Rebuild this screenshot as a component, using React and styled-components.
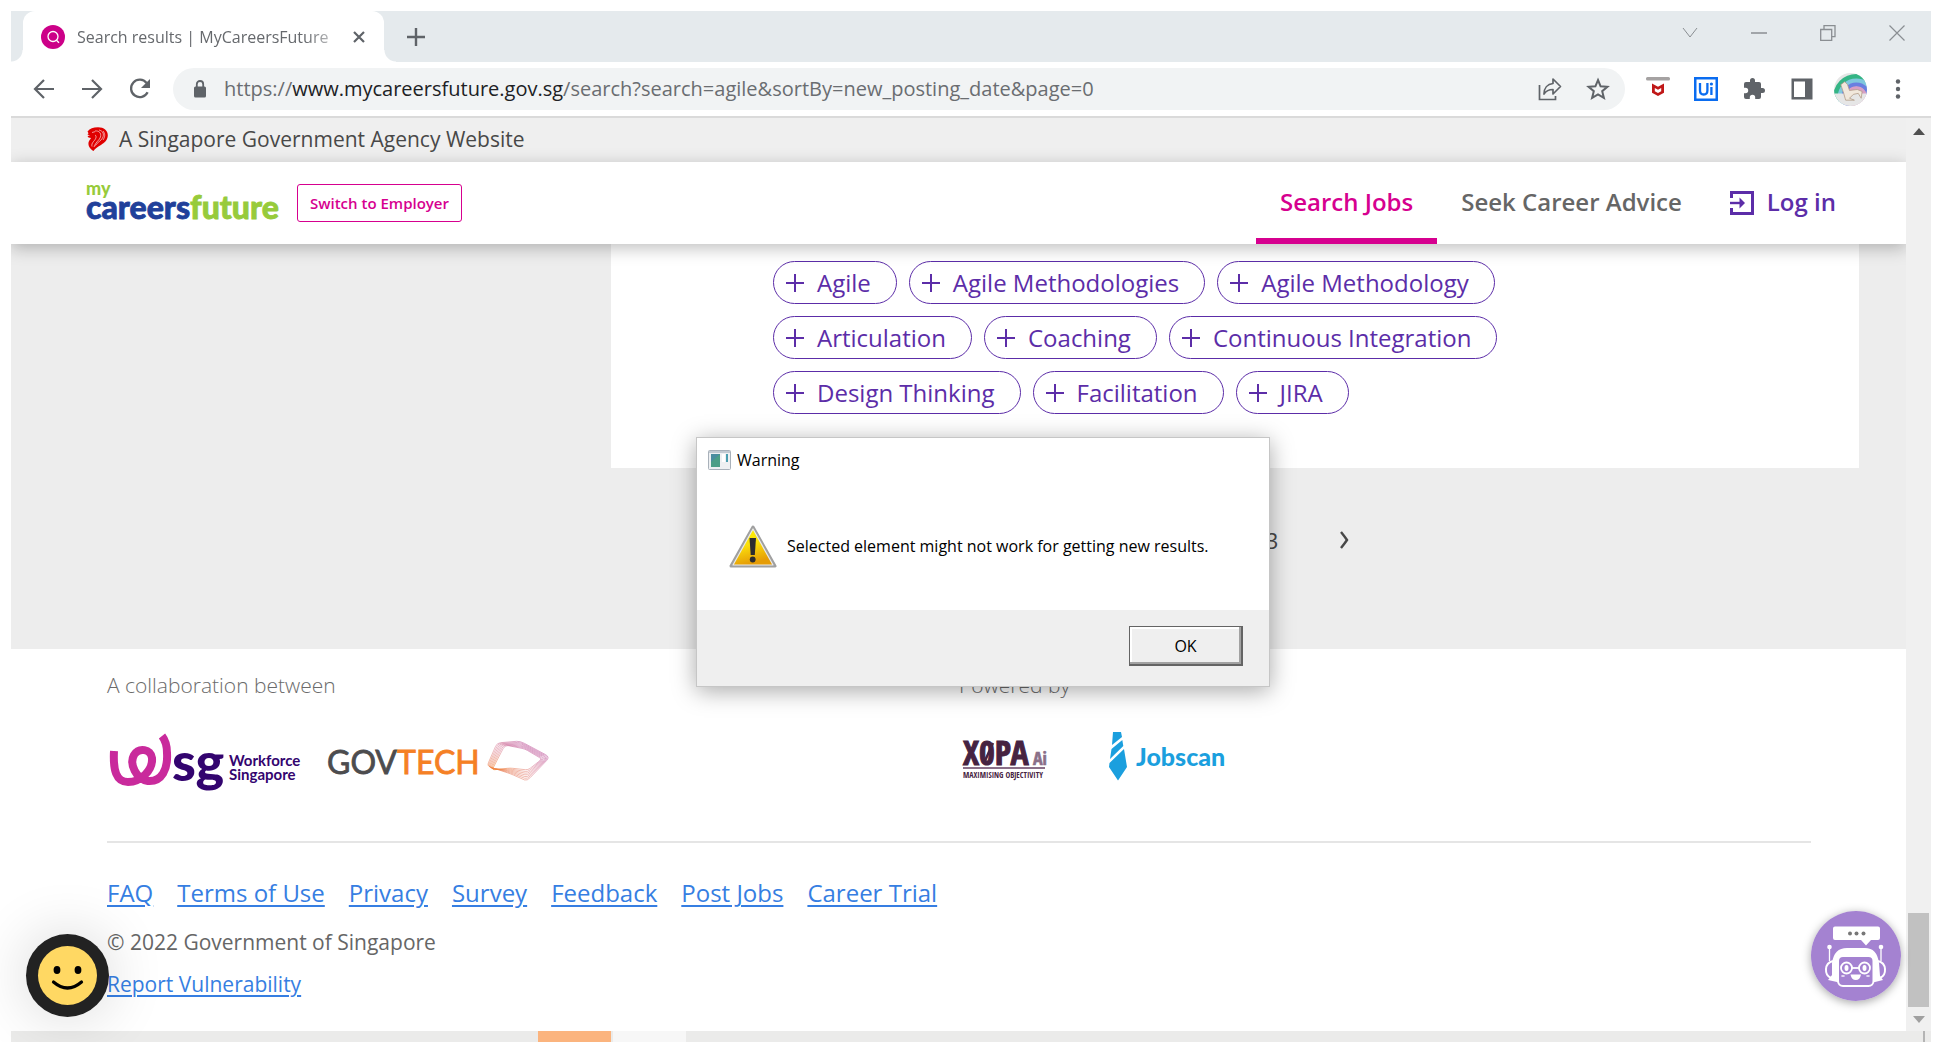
import React from "react";
import styled, { createGlobalStyle } from "styled-components";

const SANS = '"Open Sans", "Noto Sans", sans-serif';

const GlobalStyle = createGlobalStyle`
  *, *::before, *::after { box-sizing: border-box; }
  body { margin: 0; background: #fff; font-family: ${SANS}; overflow: hidden; }
  button, input { font-family: inherit; margin: 0; padding: 0; }
  button { border: 0; background: none; cursor: pointer; }
  svg { display: block; flex: none; overflow: visible; }
`;

const Desktop = styled.div`
  position: relative;
  height: 100vh;
  padding: 11px 11px 0;
  display: flex;
  flex-direction: column;
  overflow: hidden;
`;

/* ---------- browser chrome ---------- */
const TabStrip = styled.div`
  display: flex;
  align-items: center;
  height: 51px;
  padding-left: 12px;
  background: #e5eaed;
`;
const Tab = styled.div`
  position: relative;
  display: flex;
  align-items: center;
  height: 51px;
  width: 361px;
  padding: 0 18px 0 18px;
  background: #fff;
  border-radius: 12px 12px 0 0;
  &::before, &::after {
    content: "";
    position: absolute;
    bottom: 0;
    width: 12px;
    height: 12px;
  }
  &::before { left: -12px; background: radial-gradient(circle at 0 0, transparent 11px, #fff 12px); }
  &::after { right: -12px; background: radial-gradient(circle at 100% 0, transparent 11px, #fff 12px); }
`;
const TabTitle = styled.span`
  flex: 1;
  margin: 0 16px 0 12px;
  font-size: 16px;
  line-height: 24px;
  white-space: nowrap;
  color: #66696d;
  mask-image: linear-gradient(90deg, #000 88%, transparent 106%);
`;
const IconButton = styled.button`
  display: flex;
  align-items: center;
  justify-content: center;
  width: ${(p) => p.$w || 24}px;
  height: 24px;
  color: ${(p) => p.$color || "#5f6368"};
`;
const NewTab = styled(IconButton)`margin-left: 20px;`;
const WindowControls = styled.div`
  display: flex;
  margin: 0 0 8px auto;
  align-items: center;
`;
const Toolbar = styled.div`
  display: flex;
  align-items: center;
  height: 56px;
  padding: 0 21px;
  background: #fff;
  border-bottom: 2px solid #dadada;
  flex: none;
`;
const NavButtons = styled.div`
  display: flex;
  gap: 24px;
  margin-right: 21px;
`;
const Omnibox = styled.div`
  flex: 1;
  display: flex;
  align-items: center;
  height: 42px;
  padding: 0 15px 0 20px;
  border-radius: 21px;
  background: #f1f3f4;
`;
const Address = styled.span`
  flex: 1;
  margin-left: 17px;
  font-size: 20px;
  line-height: 28px;
  color: #6a6d71;
  white-space: nowrap;
  b { font-weight: 400; color: #202124; }
`;
const OmniActions = styled.div`
  display: flex;
  gap: 24px;
`;
const Extensions = styled.div`
  display: flex;
  align-items: center;
  gap: 24px;
  margin-left: 21px;
`;

/* ---------- page ---------- */
const Viewport = styled.div`
  flex: 1;
  min-height: 0;
  display: flex;
  overflow: hidden;
`;
const Page = styled.div`
  flex: 1;
  min-width: 0;
  display: flex;
  flex-direction: column;
  overflow: hidden;
`;
const GovBar = styled.div`
  display: flex;
  align-items: center;
  gap: 11px;
  height: 44px;
  padding: 0 0 2px 76px;
  background: #efefef;
  font-size: 21px;
  line-height: 32px;
  color: #484848;
  flex: none;
`;
const Header = styled.header`
  position: relative;
  z-index: 1;
  display: flex;
  align-items: center;
  height: 82px;
  padding: 0 46px 0 75px;
  background: #fff;
  box-shadow: 0 4px 16px rgba(0, 0, 0, 0.26);
  flex: none;
`;
const Brand = styled.a`text-decoration: none;`;
const SwitchButton = styled.button`
  height: 38px;
  margin-left: 17px;
  padding: 0 12px;
  border: 1px solid #d6008f;
  border-radius: 3px;
  color: #d6008f;
  font-size: 15px;
  font-weight: 600;
  white-space: nowrap;
`;
const MainNav = styled.nav`
  display: flex;
  align-self: stretch;
  margin-left: auto;
`;
const NavLink = styled.a`
  display: flex;
  align-items: center;
  gap: 13px;
  padding: 0 24px;
  border-bottom: 6px solid ${(p) => (p.$active ? "#d6008f" : "transparent")};
  border-top: 3px solid transparent;
  color: ${(p) => p.$color};
  font-size: 24px;
  font-weight: 600;
  text-decoration: none;
  white-space: nowrap;
`;
const Results = styled.main`
  padding: 0 47px 0 600px;
  background: #ededed;
`;
const Card = styled.section`
  padding: 17px 162px 54px;
  background: #fff;
`;
const Chips = styled.div`
  display: flex;
  flex-wrap: wrap;
  gap: 12px;
  max-width: 800px;
`;
const Chip = styled.button`
  display: flex;
  align-items: center;
  gap: 13px;
  height: 43px;
  padding: 0 25px 0 12px;
  border: 1px solid #5c2da8;
  border-radius: 22px;
  color: #5c2da8;
  font-size: 24px;
  white-space: nowrap;
`;
const Pagination = styled.nav`
  display: flex;
  align-items: center;
  gap: 57px;
  height: 181px;
  padding: 0 0 38px 653px;
`;
const PageButton = styled.button`
  display: grid;
  place-items: center;
  width: 16px;
  height: 32px;
  color: #484848;
  font-size: 22px;
`;
const Footer = styled.footer`
  flex: 1;
  padding: 20px 95px 0 96px;
  background: #fff;
`;
const Partners = styled.div`
  display: grid;
  grid-template-columns: 1fr 1fr;
  padding-bottom: 48px;
  border-bottom: 2px solid #e5e5e5;
`;
const PartnerLabel = styled.p`
  margin: 0 0 28px;
  font-size: 21px;
  font-weight: 300;
  line-height: 32px;
  color: #6b6b6b;
`;
const Logos = styled.div`
  display: flex;
  align-items: ${(p) => p.$align || "center"};
  gap: ${(p) => p.$gap}px;
  height: 64px;
`;
const FooterLinks = styled.div`
  display: flex;
  gap: 24px;
  margin: 32px 0 15px;
`;
const FooterLink = styled.a`
  font-size: ${(p) => (p.$small ? 21 : 24)}px;
  line-height: ${(p) => (p.$small ? 32 : 36)}px;
  color: #367ee2;
  text-decoration-thickness: 2px;
  text-underline-offset: 3px;
`;
const Copyright = styled.p`
  margin: 0 0 10px;
  font-size: 21px;
  line-height: 32px;
  color: #666;
`;

/* ---------- scrollbar ---------- */
const Scrollbar = styled.div`
  display: flex;
  flex-direction: column;
  align-items: center;
  justify-content: space-between;
  width: 25px;
  padding: 10px 0 8px;
  background: #f0f0f0;
`;
const Thumb = styled.div`
  width: 21px;
  height: 94px;
  margin: auto 0 9px;
  background: #c1c1c1;
`;

/* ---------- floating things ---------- */
const Floating = styled.button`
  position: absolute;
  z-index: 2;
  bottom: ${(p) => p.$bottom}px;
  left: ${(p) => p.$left || "auto"};
  right: ${(p) => p.$right || "auto"};
  border-radius: 50%;
  box-shadow: ${(p) => p.$shadow};
`;
const Dialog = styled.section`
  position: absolute;
  z-index: 3;
  top: 437px;
  left: calc(50% - 275px);
  width: 574px;
  border: 1px solid #c6c6c6;
  background: #fff;
  color: #000;
  font-size: 16px;
  line-height: 24px;
  box-shadow: 0 4px 22px rgba(0, 0, 0, 0.34);
`;
const DialogTitle = styled.h2`
  display: flex;
  align-items: center;
  gap: 6px;
  margin: 0;
  padding: 10px 11px;
  font-size: 16px;
  font-weight: 400;
`;
const DialogBody = styled.div`
  display: flex;
  align-items: center;
  gap: 10px;
  height: 128px;
  padding: 0 32px;
  white-space: nowrap;
`;
const DialogFooter = styled.div`
  display: flex;
  justify-content: flex-end;
  padding: 16px 26px 20px;
  background: #efefef;
`;
const OkButton = styled.button`
  width: 114px;
  height: 40px;
  border: 2px solid #646464;
  border-top-width: 1px;
  border-left-width: 1px;
  background: #efefef;
  box-shadow: inset -2px -2px 0 #a2a2a2, inset 2px 2px 0 #fff;
  color: #000;
  font-size: 16px;
`;

/* ---------- taskbar ---------- */
const Taskbar = styled.div`
  display: flex;
  height: 11px;
  padding-left: 527px;
  background: #ebebea;
  overflow: hidden;
  flex: none;
`;
const TaskItem = styled.div`
  width: 73px;
  margin-right: 2px;
  background: ${(p) => p.$bg};
`;
const Clock = styled.time`
  margin: 5px 118px 0 auto;
  font-size: 15px;
  line-height: 20px;
  color: #000;
`;
const ShowDesktop = styled.div`
  width: 8px;
  border-left: 2px solid #b4b4b4;
`;

/* ---------- drawings ---------- */
const Line = ({ w = 20, h = 20, d, sw = 2, ...rest }) => (
  <svg width={w} height={h} viewBox={`0 0 ${w} ${h}`} fill="none" stroke="currentColor" strokeWidth={sw} {...rest}>
    <path d={d} />
  </svg>
);

const Favicon = () => (
  <svg width="24" height="24" viewBox="0 0 24 24">
    <circle cx="12" cy="12" r="12" fill="#cc0088" />
    <g fill="none" stroke="#fff" strokeWidth="1.3">
      <circle cx="12" cy="11.5" r="5" />
      <path d="M15.500 15.200l2.500 2.600" />
    </g>
  </svg>
);

const Reload = () => (
  <svg width="22" height="22" viewBox="0 0 22 22">
    <path d="M18.600 14.200A8.700 8.700 0 1 1 17.600 5" fill="none" stroke="currentColor" strokeWidth="2.300" />
    <path d="M21 1v9h-9z" fill="currentColor" />
  </svg>
);

const Lock = () => (
  <svg width="14" height="18" viewBox="0 0 14 18">
    <rect x="1" y="6.500" width="12" height="11" rx="1.500" fill="#5f6368" />
    <path d="M3.800 7V4.200a3.200 3.200 0 0 1 6.400 0V7" fill="none" stroke="#5f6368" strokeWidth="1.800" />
  </svg>
);

const Share = () => (
  <svg width="24" height="24" viewBox="0 0 24 24" fill="none" stroke="currentColor" strokeWidth="1.700">
    <path d="M1.500 8v14.500h16V19" />
    <path d="M15 2l7.500 7.500-7.500 7.500v-4.500c-4.500 0-7 1.500-9 4.500 0-6 3.500-10 9-10.500z" strokeLinejoin="round" />
  </svg>
);

const Star = () => (
  <svg width="24" height="24" viewBox="0 0 24 24" fill="none" stroke="currentColor" strokeWidth="2">
    <path d="M12 3l2.600 6.300 6.800.500-5.200 4.400 1.700 6.700L12 17.300 6.100 20.900l1.700-6.700L2.600 9.800l6.800-.5z" />
  </svg>
);

const McAfee = () => (
  <svg width="24" height="24" viewBox="0 0 24 24">
    <rect width="24" height="3.600" rx="1.500" fill="#a5a2a2" />
    <path d="M6 6.500l6 3.200 6-3.200v9.300l-6 3.200-6-3.200z" fill="#c01818" />
    <path d="M8.800 11l3.200 1.800 3.200-1.800v3.300L12 16l-3.200-1.700z" fill="#fff" />
  </svg>
);

const UiPath = () => (
  <svg width="24" height="24" viewBox="0 0 24 24">
    <rect width="24" height="24" fill="#0a6cf0" />
    <rect x="2.500" y="2.500" width="19" height="19" fill="#fff" />
    <path d="M6 6v7.500q0 4 3.700 4t3.700-4V6M17.400 10v8" fill="none" stroke="#0a6cf0" strokeWidth="2.300" />
    <circle cx="17.400" cy="7" r="1.600" fill="#0a6cf0" />
  </svg>
);

const Puzzle = () => (
  <svg width="24" height="24" viewBox="0 0 24 24" fill="currentColor">
    <path d="M20.500 11H19V7a2 2 0 0 0-2-2h-4V3.500a2.500 2.500 0 0 0-5 0V5H4a2 2 0 0 0-2 2v3.800h1.500a2.700 2.700 0 0 1 0 5.400H2V20a2 2 0 0 0 2 2h3.800v-1.500a2.700 2.700 0 0 1 5.400 0V22H17a2 2 0 0 0 2-2v-4h1.500a2.500 2.500 0 0 0 0-5z" />
  </svg>
);

const SidePanel = () => (
  <svg width="24" height="24" viewBox="0 0 24 24">
    <rect x="1.500" y="1.500" width="21" height="21" fill="#5f6368" />
    <rect x="4" y="4.500" width="11" height="15.500" fill="#fff" />
  </svg>
);

const Avatar = () => (
  <svg width="33" height="33" viewBox="0 0 34 34">
    <defs><clipPath id="avatarClip"><circle cx="17" cy="17" r="17" /></clipPath></defs>
    <g clipPath="url(#avatarClip)">
      <rect width="34" height="34" fill="#e6e6e6" />
      <g fill="none" strokeWidth="4.500">
        <circle cx="23" cy="25" r="21" stroke="#34b585" strokeWidth="6" />
        <circle cx="23" cy="25" r="17" stroke="#7fc8dd" />
        <circle cx="23" cy="25" r="13" stroke="#6a7fe0" />
        <circle cx="23" cy="25" r="9" stroke="#d8a0c4" />
      </g>
      <path d="M0 21h34v13H0z" fill="#e6e6e6" />
      <path d="M7 12l4-3 3 3 2 6 8-1 5 2-1 7-3-5-5 1-4 4 5 2h-9l-2-7-2-6z" fill="#f1e8dc" stroke="#b09a85" strokeWidth=".8" />
    </g>
  </svg>
);

const Dots = () => (
  <svg width="24" height="24" viewBox="0 0 24 24" fill="currentColor">
    <circle cx="12" cy="4.500" r="2.200" /><circle cx="12" cy="12" r="2.200" /><circle cx="12" cy="19.500" r="2.200" />
  </svg>
);

const Lion = () => (
  <svg width="21" height="24" viewBox="0 0 21 24">
    <path d="M.5 4.500C3 1.500 6 .3 11 .3c6 0 9.800 3.500 9.800 8 0 5-3.500 7.500-6.800 9.700-3 1.800-6 3.500-7.500 6C3 22 1 19 1.500 15.500c.3-2 2-3 2.500-4.500L1.500 10.500.5 9 3 8.500.5 7.500l1-1.200z" fill="#e00000" />
    <path d="M8 4c4-.5 6.500 2 5.500 6-.8 3-5 5-6.500 10M12 3c4 1 5.500 4 3.500 8-1.500 3-5 4-7 7.500M16 4c2.500 3 2 6 0 9M5 5.500l3-.8M8 8c2 1 1 4-1.500 6.500-1.500 2-2 3-1.500 5" fill="none" stroke="#fff" strokeWidth=".6" />
  </svg>
);

const BrandLogo = () => (
  <svg width="194" height="46" viewBox="0 0 194 46" role="img" aria-label="mycareersfuture">
    <g fontFamily="Lato, sans-serif" fontWeight="900">
      <text x="0" y="15" fontSize="18" fill="#97cb3b">my</text>
      <text x="0" y="39" fontSize="32" fill="#20409a" stroke="#20409a" strokeWidth=".8">
        careers<tspan fill="#97cb3b" stroke="#97cb3b">future</tspan>
      </text>
    </g>
  </svg>
);

const LoginIcon = () => (
  <svg width="24" height="24" viewBox="0 0 24 24" fill="none" stroke="#5c2da8" strokeWidth="3">
    <path d="M1.500 8V2.500h21v21h-21V18" />
    <path d="M0 13h13" strokeWidth="2.400" />
    <path d="M9.500 7.500L15 13l-5.500 5.500z" fill="#5c2da8" stroke="none" />
  </svg>
);

const Wsg = () => (
  <svg width="192" height="64" viewBox="0 0 192 64" role="img" aria-label="WSG Workforce Singapore">
    <path d="M7 22C6 41 9 53 21 53c13 0 25-12 24-24-1-9-13-11-18-3-5 9 2 24 14 26 14 1 20-12 19-28 0-6-1-12-5-17" fill="none" stroke="#c92a9c" strokeWidth="8" strokeLinejoin="round" />
    <text x="65" y="52" fontFamily="Lato, sans-serif" fontWeight="900" fontSize="54" fill="#33046f">sg</text>
    <g fontFamily="Lato, sans-serif" fontWeight="700" fontSize="15" fill="#33046f">
      <text x="122" y="37">Workforce</text>
      <text x="122" y="51">Singapore</text>
    </g>
  </svg>
);

/* The ribbon is a sheaf of outlines that runs from the outer edge to the hole. */
const OUTER = [[159, 29], [169, 6], [192, 4], [222, 20], [199, 44], [183, 37]];
const INNER = [[164, 33], [177, 8], [197, 12], [214, 22], [200, 33], [182, 31]];
const RIBBON = Array.from({ length: 7 }, (_, i) => {
  const pts = OUTER.map(([x, y], k) => [
    x + ((INNER[k][0] - x) * i) / 6,
    y + ((INNER[k][1] - y) * i) / 6,
  ]);
  const soft = (a, b) => [a[0] + (b[0] - a[0]) * 0.15, a[1] + (b[1] - a[1]) * 0.15];
  return pts
    .map((p, k) => {
      const from = soft(p, pts[(k + 5) % 6]);
      const to = soft(p, pts[(k + 1) % 6]);
      return `${k ? "L" : "M"}${from.join(" ")}Q${p.join(" ")} ${to.join(" ")}`;
    })
    .join("") + "Z";
});

const GovTech = () => (
  <svg width="224" height="48" viewBox="0 0 224 48" role="img" aria-label="GovTech">
    <text x="-1" y="37" fontFamily="Lato, sans-serif" fontSize="32" fill="#4c4c4e" stroke="#4c4c4e" strokeWidth=".8">
      GOV<tspan fill="#f58025" stroke="#f58025">TECH</tspan>
    </text>
    <defs>
      <linearGradient id="twist" x1="0" y1="1" x2="1" y2="0">
        <stop offset="0" stopColor="#f58025" /><stop offset=".45" stopColor="#e08f9e" /><stop offset="1" stopColor="#b54fa8" />
      </linearGradient>
    </defs>
    <g fill="none" stroke="url(#twist)" strokeWidth=".6">
      {RIBBON.map((d) => <path key={d} d={d} />)}
    </g>
  </svg>
);

const Xopa = () => (
  <svg width="92" height="50" viewBox="0 0 92 50" role="img" aria-label="X0PA Ai Maximising Objectivity">
    <g fontFamily='"Liberation Sans Narrow", "Open Sans Condensed", sans-serif' fill="#462341">
      <text x="4" y="36" fontSize="34" stroke="#462341" strokeWidth="1">X0PA</text>
      <text x="74" y="36" fontSize="18" fill="#8a6f88" stroke="#8a6f88" strokeWidth=".6">Ai</text>
      <path d="M25 34L34 14" stroke="#462341" strokeWidth="2.500" />
      <path d="M4 39h82" stroke="#8a6f88" strokeWidth="2" />
      <text x="4" y="49" fontSize="8">MAXIMISING OBJECTIVITY</text>
    </g>
  </svg>
);

const Jobscan = () => (
  <svg width="124" height="50" viewBox="0 0 124 50" role="img" aria-label="Jobscan">
    <path transform="translate(1 3)" d="M5 0h8l1 5L4 13zM14.300 8l1 6L2 27 3.500 17zM16 17l3 18-9 13.500L1 35l.5-4z" fill="#1b9fde" />
    <text x="29" y="37" fontFamily="Lato, sans-serif" fontWeight="900" fontSize="25" fill="#1b9fde">Jobscan</text>
  </svg>
);

const AppIcon = () => (
  <svg width="23" height="20" viewBox="0 0 23 20">
    <rect x=".5" y=".5" width="22" height="19" rx="1" fill="#eef0f2" stroke="#a9b1ba" />
    <path d="M1 2h21" stroke="#c3cad2" strokeWidth="2" />
    <rect x="3" y="4" width="9" height="13" fill="#4b9e86" />
    <path d="M3 4h9l-9 8z" fill="#4b82b0" opacity=".6" />
    <rect x="14" y="4" width="3" height="8" fill="#fff" /><rect x="18" y="4" width="2" height="8" fill="#4b9eb0" />
  </svg>
);

const WarningIcon = () => (
  <svg width="48" height="44" viewBox="0 0 48 44">
    <defs>
      <linearGradient id="warn" x1="0" y1="0" x2="0.300" y2="1">
        <stop offset="0" stopColor="#fff200" /><stop offset=".5" stopColor="#fbe00c" /><stop offset="1" stopColor="#e59c06" />
      </linearGradient>
    </defs>
    <path d="M24 3L46 42H2z" fill="#a8a8a8" stroke="#a0a0a0" strokeWidth="3" strokeLinejoin="round" />
    <path d="M24 5L44 41H4z" fill="url(#warn)" stroke="#e9e9e9" strokeWidth="1.200" strokeLinejoin="round" />
    <path d="M20.500 14h6.500l-1.200 17h-4.100z" fill="#2c2c30" />
    <circle cx="23.700" cy="35.500" r="2.900" fill="#2c2c30" />
  </svg>
);

const Smiley = () => (
  <svg width="83" height="83" viewBox="0 0 83 83">
    <circle cx="41.500" cy="41.500" r="41.500" fill="#222" />
    <circle cx="41.500" cy="41.500" r="29.500" fill="#ffd863" />
    <ellipse cx="31" cy="36" rx="3.400" ry="4" /><ellipse cx="52" cy="36" rx="3.400" ry="4" />
    <path d="M27.500 48q14 12 28 0" fill="none" stroke="#000" strokeWidth="3.200" strokeLinecap="round" />
  </svg>
);

const Robot = () => (
  <svg width="90" height="90" viewBox="0 0 90 90">
    <circle cx="45" cy="45" r="45" fill="#a482d1" />
    <path d="M24 15.500h43a2 2 0 0 1 2 2V27a2 2 0 0 1-2 2h-7l-5 5.500-5-5.500H24a2 2 0 0 1-2-2v-9.500a2 2 0 0 1 2-2z" fill="#fff" />
    <g fill="#777"><circle cx="39" cy="22.500" r="2" /><circle cx="45.500" cy="22.500" r="2" /><circle cx="52.500" cy="22.500" r="2" /></g>
    <g fill="none" stroke="#fff" strokeWidth="1.300">
      <path d="M18.500 37v13M70 37v13" />
      <path d="M22 50c-9 2-9 14-2 17M67 50c9 2 9 14 2 17" strokeWidth="2" />
    </g>
    <circle cx="18.500" cy="36" r="2.300" fill="#fff" /><circle cx="70" cy="36" r="2.300" fill="#fff" />
    <path d="M21 52q2-15 15-15h18q12 0 14 15l1 13 3 4-8 2H26l-9-2 4-5z" fill="#fff" />
    <rect x="27" y="45" width="35.500" height="30" rx="5" fill="#a482d1" stroke="#fff" strokeWidth="2" />
    <g fill="none" stroke="#fff" strokeWidth="1.800">
      <circle cx="35.500" cy="57" r="5.500" /><circle cx="53.500" cy="57" r="5.500" /><path d="M41 57h7" />
    </g>
    <g fill="#fff"><ellipse cx="35.500" cy="57" rx="2" ry="3" /><ellipse cx="53.500" cy="57" rx="2" ry="3" />
      <path d="M39.500 63.500h10.500q-1 5.500-5.200 5.500t-5.300-5.500z" />
      <ellipse cx="32" cy="65" rx="2" ry=".8" /><ellipse cx="57" cy="65" rx="2" ry=".8" /></g>
  </svg>
);

const SKILLS = ["Agile", "Agile Methodologies", "Agile Methodology", "Articulation", "Coaching", "Continuous Integration", "Design Thinking", "Facilitation", "JIRA"];
const LINKS = ["FAQ", "Terms of Use", "Privacy", "Survey", "Feedback", "Post Jobs", "Career Trial"];

export default function App() {
  return (
    <Desktop>
      <GlobalStyle />
      <TabStrip>
        <Tab>
          <Favicon />
          <TabTitle>Search results | MyCareersFuture</TabTitle>
          <IconButton $w={14} aria-label="Close tab"><Line w={14} h={14} d="M2 2l10 10M12 2L2 12" sw={2.2} /></IconButton>
        </Tab>
        <NewTab aria-label="New tab"><Line w={20} h={20} d="M10 1v18M1 10h18" sw={2.4} /></NewTab>
        <WindowControls>
          <IconButton $w={69} $color="#8a8e92" aria-label="Search tabs"><Line w={16} h={10} d="M1 0l7 9 7-9" sw={1} /></IconButton>
          <IconButton $w={69} $color="#8a8e92" aria-label="Minimize"><Line w={16} h={2} d="M0 1h16" sw={1.5} /></IconButton>
          <IconButton $w={69} $color="#8a8e92" aria-label="Restore"><Line w={16} h={16} d="M.7 4.500h11v10.800h-11zM4 4.500V.7h11v11h-3" sw={1.3} /></IconButton>
          <IconButton $w={69} $color="#8a8e92" aria-label="Close"><Line w={16} h={16} d="M.5.5l15 15M15.500.5l-15 15" sw={1.2} /></IconButton>
        </WindowControls>
      </TabStrip>

      <Toolbar>
        <NavButtons>
          <IconButton aria-label="Back"><Line w={24} h={24} d="M22 12H3M12 3l-9 9 9 9" sw={2.2} /></IconButton>
          <IconButton aria-label="Forward"><Line w={24} h={24} d="M2 12h19M12 3l9 9-9 9" sw={2.2} /></IconButton>
          <IconButton aria-label="Reload"><Reload /></IconButton>
        </NavButtons>
        <Omnibox>
          <Lock />
          <Address>https://<b>www.mycareersfuture.gov.sg</b>/search?search=agile&amp;sortBy=new_posting_date&amp;page=0</Address>
          <OmniActions>
            <IconButton aria-label="Share"><Share /></IconButton>
            <IconButton aria-label="Bookmark"><Star /></IconButton>
          </OmniActions>
        </Omnibox>
        <Extensions>
          <IconButton aria-label="McAfee"><McAfee /></IconButton>
          <IconButton aria-label="UiPath"><UiPath /></IconButton>
          <IconButton aria-label="Extensions"><Puzzle /></IconButton>
          <IconButton aria-label="Side panel"><SidePanel /></IconButton>
          <IconButton aria-label="Profile"><Avatar /></IconButton>
          <IconButton aria-label="Menu"><Dots /></IconButton>
        </Extensions>
      </Toolbar>

      <Viewport>
        <Page>
          <GovBar><Lion />A Singapore Government Agency Website</GovBar>
          <Header>
            <Brand href="#home"><BrandLogo /></Brand>
            <SwitchButton>Switch to Employer</SwitchButton>
            <MainNav>
              <NavLink href="#jobs" $active $color="#d6008f">Search Jobs</NavLink>
              <NavLink href="#advice" $color="#666">Seek Career Advice</NavLink>
              <NavLink href="#login" $color="#5c2da8"><LoginIcon />Log in</NavLink>
            </MainNav>
          </Header>
          <Results>
            <Card>
              <Chips>
                {SKILLS.map((skill) => (
                  <Chip key={skill}><Line w={18} h={18} d="M9 0v18M0 9h18" sw={2} />{skill}</Chip>
                ))}
              </Chips>
            </Card>
            <Pagination aria-label="Pages">
              <PageButton>3</PageButton>
              <PageButton aria-label="Next"><Line w={12} h={18} d="M2 1q4 5 6 8q-2 3-6 8" sw={2.4} /></PageButton>
            </Pagination>
          </Results>
          <Footer>
            <Partners>
              <div>
                <PartnerLabel>A collaboration between</PartnerLabel>
                <Logos $gap={29}><Wsg /><GovTech /></Logos>
              </div>
              <div>
                <PartnerLabel>Powered by</PartnerLabel>
                <Logos $gap={56} $align="flex-start"><Xopa /><Jobscan /></Logos>
              </div>
            </Partners>
            <FooterLinks>
              {LINKS.map((link) => <FooterLink key={link} href="#footer">{link}</FooterLink>)}
            </FooterLinks>
            <Copyright>© 2022 Government of Singapore</Copyright>
            <FooterLink $small href="#report">Report Vulnerability</FooterLink>
          </Footer>
        </Page>
        <Scrollbar>
          <svg width="12" height="7"><path d="M6 0l6 7H0z" fill="#505050" /></svg>
          <Thumb />
          <svg width="12" height="7"><path d="M0 0h12L6 7z" fill="#a0a0a0" /></svg>
        </Scrollbar>
      </Viewport>

      <Taskbar>
        <TaskItem $bg="#fbb47e" />
        <TaskItem $bg="#f7f7f7" />
        <Clock>11:00</Clock>
        <ShowDesktop />
      </Taskbar>

      <Floating $left="26px" $bottom={25} $shadow="0 0 60px rgba(0, 0, 0, 0.16)" aria-label="Feedback"><Smiley /></Floating>
      <Floating $right="41px" $bottom={41} $shadow="0 2px 10px rgba(0, 0, 0, 0.35)" aria-label="Chat"><Robot /></Floating>

      <Dialog role="dialog" aria-labelledby="dialog-title">
        <DialogTitle id="dialog-title"><AppIcon />Warning</DialogTitle>
        <DialogBody><WarningIcon />Selected element might not work for getting new results.</DialogBody>
        <DialogFooter><OkButton>OK</OkButton></DialogFooter>
      </Dialog>
    </Desktop>
  );
}
